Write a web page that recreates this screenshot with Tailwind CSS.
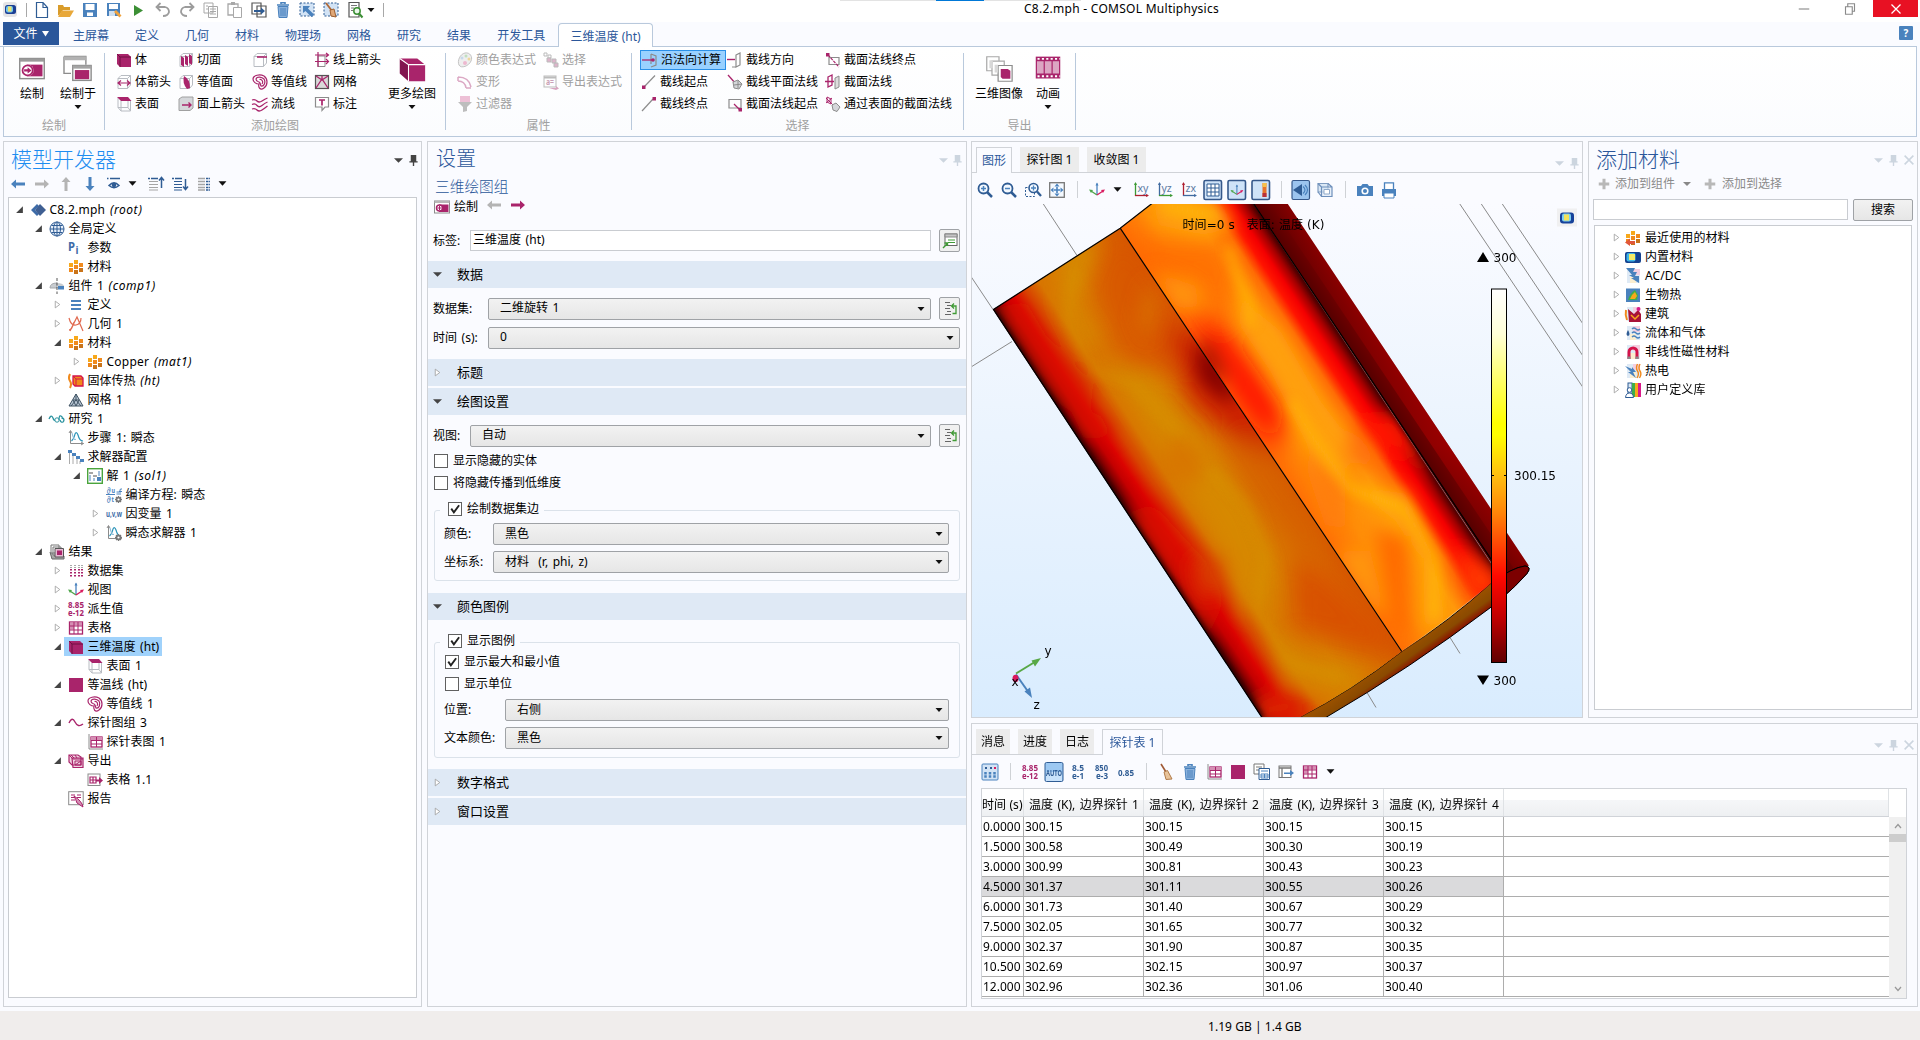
<!DOCTYPE html>
<html lang="zh-CN">
<head>
<meta charset="utf-8">
<title>C8.2.mph - COMSOL Multiphysics</title>
<script src="https://cdn.jsdelivr.net/npm/@tailwindcss/browser@4"></script>
</head>
<body class="w-[1920px] h-[1040px] overflow-hidden flex flex-col bg-[#fafbff] text-black text-[12px] leading-4 whitespace-nowrap font-['Noto_Sans','Noto_Sans_CJK_SC',sans-serif]">

<!-- title bar -->
<header class="relative h-[22px] shrink-0 bg-white flex items-start">
  <div class="flex items-center h-5 w-[1024px]">
    <span class="w-[18px] pl-0.5"><i data-i="app" class="size-4"></i></span>
    <span class="w-px h-[14px] bg-[#a8a8a8] ml-2"></span>
    <div id="qat" class="flex items-center ml-[3px]"></div>
    <span class="w-2 flex justify-center"><i data-i="down" class="size-2"></i></span>
    <span class="w-px h-[14px] bg-[#a8a8a8] ml-2"></span>
  </div>
  <div class="h-[18px] leading-[18px] tracking-[0.27px]">C8.2.mph - COMSOL Multiphysics</div>
  <div class="ml-auto flex h-[17px] mr-[2px]">
    <span class="w-[46px] flex items-center justify-center"><i data-i="min" class="size-3"></i></span>
    <span class="w-[46px] flex items-center justify-center"><i data-i="restore" class="size-3"></i></span>
    <span class="w-[45px] flex items-center justify-center bg-[#e81123]"><i data-i="close" class="size-3"></i></span>
  </div>
  <div class="absolute left-[840px] top-0 w-[241px] h-px bg-[#e3e3e3]"><div class="ml-24 w-12 h-px bg-[#0078d7]"></div></div>
</header>

<!-- ribbon tabs -->
<nav class="h-[25px] shrink-0 flex items-stretch border-b border-[#b9c9dc] text-[#2b579a] pl-[3px] mr-[3px]">
  <div class="w-14 h-[23px] bg-[#2b579a] text-white flex items-center justify-center gap-1">文件<i data-i="downw" class="size-[7px]"></i></div>
  <div id="tabs" class="flex items-center pl-[1px] pt-1"></div>
  <div class="relative -mb-px w-[95px] mt-[1px] border border-b-0 border-[#b9c9dc] rounded-t bg-white flex items-center justify-center pt-[2px]">三维温度 (ht)</div>
  <div class="ml-auto mt-[4px] mr-[4px] w-[14px] h-[14px] rounded-[1px] bg-[#4a82bd] text-white text-[10px] leading-[14px] font-bold text-center">?</div>
</nav>

<!-- ribbon -->
<section class="h-[90px] shrink-0 mx-[3px] border border-t-0 border-[#b9c9dc] bg-gradient-to-b from-white to-[#fbfcfe] flex">
  <div class="w-[101px] my-[6px] border-r border-[#b9c9dc] relative flex">
    <div class="w-[56px] flex flex-col items-center pt-[2px]"><i data-i="plot" class="w-7 h-7"></i><span class="mt-[3px]">绘制</span></div>
    <div class="-ml-1 w-[44px] flex flex-col items-center pt-[2px]"><i data-i="plotin" class="w-8 h-7"></i><span class="mt-[3px]">绘制于</span><i data-i="down" class="size-2 mt-[1px]"></i></div>
    <span class="absolute left-0 right-0 bottom-[-4px] text-center text-[#a0a0a0]">绘制</span>
  </div>
  <div class="w-[341px] my-[6px] border-r border-[#b9c9dc] relative flex">
    <div id="rg1" class="grid grid-flow-col grid-rows-3 h-[66px] grid-cols-[62px_74px_62px_70px] -mt-1 pl-[10px]"></div>
    <div class="w-[52px] ml-[3px] flex flex-col items-center pt-[2px]"><i data-i="morecube" class="w-7 h-7"></i><span class="mt-[3px]">更多绘图</span><i data-i="down" class="size-2 mt-[1px]"></i></div>
    <span class="absolute left-0 right-0 bottom-[-4px] text-center text-[#a0a0a0]">添加绘图</span>
  </div>
  <div class="w-[186px] my-[6px] border-r border-[#b9c9dc] relative text-[#a0a0a0]">
    <div id="rg2" class="grid grid-flow-col grid-rows-3 h-[66px] grid-cols-[86px_90px] -mt-1 pl-[10px]"></div>
    <span class="absolute left-0 right-0 bottom-[-4px] text-center">属性</span>
  </div>
  <div class="w-[332px] my-[6px] border-r border-[#b9c9dc] relative">
    <div id="rg3" class="grid grid-flow-col grid-rows-3 h-[66px] grid-cols-[86px_98px_130px] -mt-1 pl-[8px]"></div>
    <span class="absolute left-0 right-0 bottom-[-4px] text-center text-[#a0a0a0]">选择</span>
  </div>
  <div class="w-[112px] my-[6px] border-r border-[#b9c9dc] relative flex">
    <div class="w-[50px] ml-[10px] flex flex-col items-center pt-[2px]"><i data-i="img3d" class="w-8 h-7"></i><span class="mt-[3px]">三维图像</span></div>
    <div class="w-9 ml-[6px] flex flex-col items-center pt-[1px]"><i data-i="film" class="w-8 h-7"></i><span class="mt-1">动画</span><i data-i="down" class="size-2 mt-[1px]"></i></div>
    <span class="absolute left-0 right-0 bottom-[-4px] text-center text-[#a0a0a0]">导出</span>
  </div>
</section>

<main class="flex mt-[4px] h-[866px] shrink-0 pl-[3px]">
  <!-- model builder -->
  <section class="w-[419px] border border-[#d0d3d8] flex flex-col">
    <div class="h-9 flex items-center pl-[7px] pr-[2px]">
      <h2 class="text-[21px] leading-9 font-light text-[#1e8df0] -mt-0.5">模型开发器</h2>
      <i data-i="ddark" class="size-[9px] ml-auto"></i><i data-i="pin" class="size-[11px] ml-[5px]"></i>
    </div>
    <div id="treebar" class="h-[19px] flex items-center pl-[2px] -mt-[4px]"></div>
    <div id="tree" class="mt-[4px] ml-1 w-[409px] h-[801px] border border-[#c9ccd1] bg-white pt-[2px] [word-spacing:1.5px]"></div>
  </section>

  <!-- settings -->
  <section class="ml-[5px] w-[540px] border border-[#d0d3d8] flex flex-col">
    <div class="h-9 flex items-center pl-2 pr-[3px]">
      <h2 class="text-[20px] leading-9 font-light text-[#2b579a] -mt-0.5">设置</h2>
      <i data-i="dgray" class="size-[9px] ml-auto"></i><i data-i="ping" class="size-[11px] ml-[4px]"></i>
    </div>
    <div class="h-[18px] leading-[16px] text-[14.7px] text-[#2b579a] pl-[7px] font-light">三维绘图组</div>
    <div class="h-[22px] flex items-center pl-[6px]"><i data-i="plotsm" class="size-4"></i><span class="ml-1">绘制</span><i data-i="leftg" class="size-4 ml-2 -mt-1"></i><i data-i="rightm" class="size-4 ml-2 -mt-1"></i></div>
    <div class="mt-[11px] h-[23px] flex items-center pl-[5px]">
      <span class="w-[37px]">标签:</span><div class="w-[461px] h-[21px] border border-[#c9ccd1] bg-white px-[2px] leading-[18px] [word-spacing:1.5px]">三维温度 (ht)</div>
      <div class="ml-[8px] w-[21px] h-[23px] rounded-[2px] border border-[#9fa2a6] bg-[#f0f0f0] flex items-center justify-center"><i data-i="lbl" class="size-4"></i></div>
    </div>
    <div class="mt-[9px]" data-sec="数据" data-open="1"></div>
    <div class="mt-[9px] h-[23px] flex items-center pl-[5px]" data-row="数据集:|55|443|二维旋转 1|btn"></div>
    <div class="mt-[6px] h-[23px] flex items-center pl-[5px]" data-row="时间 (s):|55|472|0|"></div>
    <div class="mt-[10px]" data-sec="标题"></div>
    <div class="mt-[2px]" data-sec="绘图设置" data-open="1"></div>
    <div class="mt-[9px] h-[23px] flex items-center pl-[5px]" data-row="视图:|37|461|自动|btn"></div>
    <div class="mt-[3px] h-[22px] flex items-center pl-[6px]" data-chk="0">显示隐藏的实体</div>
    <div class="h-[22px] flex items-center pl-[6px]" data-chk="0">将隐藏传播到低维度</div>
    <fieldset class="relative mt-[16px] ml-[6px] w-[526px] h-[71px] border border-[#dbe2ea] rounded-[3px] flex flex-col">
      <div class="absolute left-[5px] top-[-13px] h-[22px] w-[104px] bg-[#fafbff] flex items-center pl-2" data-chk="1">绘制数据集边</div>
      <div class="mt-[12px] h-[22px] flex items-center pl-[9px]" data-row="颜色:|49|456|黑色|"></div>
      <div class="mt-[6px] h-[22px] flex items-center pl-[9px]" data-row="坐标系:|49|456|材料&nbsp; (r, phi, z)|"></div>
    </fieldset>
    <div class="mt-[12px]" data-sec="颜色图例" data-open="1"></div>
    <fieldset class="relative mt-[22px] ml-[6px] w-[526px] h-[116px] border border-[#dbe2ea] rounded-[3px] flex flex-col">
      <div class="absolute left-[5px] top-[-13px] h-[22px] w-[80px] bg-[#fafbff] flex items-center pl-2" data-chk="1">显示图例</div>
      <div class="mt-[8px] h-[22px] flex items-center pl-[10px]" data-chk="1">显示最大和最小值</div>
      <div class="h-[22px] flex items-center pl-[10px]" data-chk="0">显示单位</div>
      <div class="mt-[4px] h-[22px] flex items-center pl-[9px]" data-row="位置:|61|444|右侧|"></div>
      <div class="mt-[6px] h-[22px] flex items-center pl-[9px]" data-row="文本颜色:|61|444|黑色|"></div>
    </fieldset>
    <div class="mt-[11px]" data-sec="数字格式"></div>
    <div class="mt-[2px]" data-sec="窗口设置"></div>
  </section>

  <div class="ml-[4px] w-[947px] flex flex-col gap-[5px]">
    <div class="flex h-[577px] gap-[5px]">
      <!-- graphics -->
      <section class="w-[612px] border border-[#d0d3d8] flex flex-col">
        <div class="h-[31px] border-b border-[#d0d3d8] flex items-end pl-1 pr-[2px] shrink-0">
          <div class="-mb-px w-[36px] h-[26px] border border-b-0 border-[#d0d3d8] bg-[#fafbff] text-[#2b579a] flex items-center justify-center">图形</div>
          <div class="ml-[8px] w-[59px] h-[25px] bg-[#ececec] flex items-center justify-center">探针图 1</div>
          <div class="ml-[8px] w-[59px] h-[25px] bg-[#ececec] flex items-center justify-center">收敛图 1</div>
          <i data-i="dgray" class="size-[9px] ml-auto mb-1"></i><i data-i="ping" class="size-[11px] ml-[5px] mb-[3px]"></i>
        </div>
        <div id="gbar" class="h-[31px] flex items-center pl-[1px] pt-[2px] shrink-0"></div>
        <svg class="w-[610px] h-[513px] mt-auto" viewBox="972 203.5 610 513" font-family="'DejaVu Sans','Noto Sans CJK SC',sans-serif" font-size="12">
          <defs>
            <linearGradient id="bg" x2="0" y2="1"><stop stop-color="#fafbff"/><stop offset=".45" stop-color="#ebf4fe"/><stop offset="1" stop-color="#d9ecfe"/></linearGradient>
            <linearGradient id="gl" gradientUnits="userSpaceOnUse" x1="993" y1="309" x2="1118.500" y2="226.500"><stop stop-color="#480000"/><stop offset=".04" stop-color="#7a0000"/><stop offset=".1" stop-color="#c40000"/><stop offset=".16" stop-color="#dc0400"/><stop offset=".25" stop-color="#d84400"/><stop offset=".36" stop-color="#d87600"/><stop offset=".6" stop-color="#d88200"/><stop offset=".85" stop-color="#d87000"/><stop offset="1" stop-color="#d65a00"/></linearGradient>
            <linearGradient id="gr" gradientUnits="userSpaceOnUse" x1="1120" y1="228" x2="1224" y2="159"><stop stop-color="#ff6e06"/><stop offset=".25" stop-color="#ff8e08"/><stop offset=".55" stop-color="#ff980c"/><stop offset=".7" stop-color="#ff6c06"/><stop offset=".79" stop-color="#ff1400"/><stop offset=".86" stop-color="#f40000"/><stop offset=".93" stop-color="#a80000"/><stop offset="1" stop-color="#4c0000"/></linearGradient>
            <linearGradient id="gd" gradientUnits="userSpaceOnUse" x1="1253" y1="203" x2="1277" y2="187"><stop stop-color="#540000"/><stop offset="1" stop-color="#840000"/></linearGradient>
            <linearGradient id="gd2" x2="0" y2="1"><stop stop-color="#a00000" stop-opacity="0"/><stop offset=".65" stop-color="#a80000" stop-opacity=".6"/><stop offset="1" stop-color="#900000" stop-opacity=".2"/></linearGradient>
            <linearGradient id="ge" gradientUnits="userSpaceOnUse" x1="1400" y1="651" x2="1413" y2="669"><stop stop-color="#985000"/><stop offset=".45" stop-color="#8a4a00"/><stop offset=".75" stop-color="#8a1a00"/><stop offset="1" stop-color="#5a0000"/></linearGradient>
            <linearGradient id="bar" x2="0" y2="1"><stop stop-color="#fff"/><stop offset=".12" stop-color="#ffffd8"/><stop offset=".36" stop-color="#ffff00"/><stop offset=".39" stop-color="#ffff00"/><stop offset=".5" stop-color="#ffbe10"/><stop offset=".6" stop-color="#ff8408"/><stop offset=".77" stop-color="#ff0800"/><stop offset=".88" stop-color="#c00000"/><stop offset="1" stop-color="#600000"/></linearGradient>
            <filter id="b0" x="-60%" y="-60%" width="220%" height="220%"><feGaussianBlur stdDeviation="13"/></filter>
            <filter id="b1" x="-50%" y="-50%" width="200%" height="200%"><feGaussianBlur stdDeviation="9"/></filter>
            <filter id="b2" x="-50%" y="-50%" width="200%" height="200%"><feGaussianBlur stdDeviation="6"/></filter>
            <filter id="b3" x="-50%" y="-50%" width="200%" height="200%"><feGaussianBlur stdDeviation="2.500"/></filter>
            <clipPath id="cl"><path d="M993 309 1120.200 227.700 1401.800 651Q1350 691 1299.400 717H1261.800z"/></clipPath>
            <clipPath id="cr"><path d="M1120.200 227.700 1152 203H1253.500L1506.500 586 1491 582.700Q1445 622 1401.800 651z"/></clipPath>
          </defs>
          <rect x="971" y="203" width="613" height="515" fill="url(#bg)"/>
          <g stroke="#8a8a8a" stroke-width="1"><path d="M1043 203 1077 255M971 276 993 309M971 366.500 1012 341M1459.500 203 1583 387M1481 203 1583 355.500M1502 203 1583 323.500M1450 637 1460 653M1367 692 1376 707"/></g>
          <path d="M1253.500 203H1287.500L1528.700 565 1506 594 1491 562z" fill="url(#gd)"/>
          <path d="M1270 203H1287.500L1528.700 565 1518 574z" fill="url(#gd2)"/>
          <path d="M1299.400 717Q1352 690 1401.800 651 1450 620 1491 582.700 1512 567 1525 565.500 1532 566 1527 573 1514 588 1491 606.700 1410 668 1325.800 717z" fill="url(#ge)" stroke="#000"/>
          <path d="M1491 583Q1512 567 1525 565.500 1532 566 1527 573 1516 586 1500 599z" fill="#7c0000" stroke="#000"/>
          <g clip-path="url(#cl)">
            <rect x="980" y="200" width="440" height="520" fill="url(#gl)"/>
            <g filter="url(#b0)">
              <path d="M1090 290 1108 235 1130 235 1200 330 1180 370 1120 370z" fill="#d85200" opacity=".8"/>
              <path d="M1165 325 1205 330 1290 450 1250 450 1190 400z" fill="#cc1c00"/>
              <path d="M1225 440 1260 440 1330 540 1310 570 1250 490z" fill="#d66000" opacity=".8"/>
              <path d="M1290 560 1325 570 1400 640 1380 655 1290 630z" fill="#d84c00" opacity=".9"/>
              <path d="M1120 520 1150 500 1205 560 1225 600 1200 650z" fill="#dc1400" opacity=".8"/>
            </g>
            <g filter="url(#b1)">
              <path d="M1070 240 1098 245 1074 300 1100 340 1085 345 1060 300z" fill="#d68c00" opacity=".8"/>
              <path d="M1148 280 1160 300 1150 340 1136 320z" fill="#d87400" opacity=".7"/>
              <path d="M993 309 1025 300 1046 335 1095 385 1085 420 1040 390z" fill="#dc1800" opacity=".5"/>
              <path d="M1195 345 1215 350 1240 395 1225 400 1200 380z" fill="#800000"/>
              <path d="M1100 355 1150 375 1185 420 1210 450 1250 510 1270 570 1245 620 1225 560 1190 500 1130 400z" fill="#d68c00" opacity=".7"/>
              <path d="M1066 400 1100 415 1115 435 1085 440z" fill="#dc1000" opacity=".7"/>
              <path d="M1170 430 1205 455 1195 490 1165 465z" fill="#d87600"/>
              <path d="M1190 560 1225 555 1225 590 1200 600z" fill="#d84000" opacity=".8"/>
              <path d="M1250 575 1268 570 1275 630 1310 660 1370 672 1340 690 1285 680z" fill="#d68c00" opacity=".8"/>
              <path d="M1250 700 1290 690 1320 715 1260 725z" fill="#dc2000"/>
            </g>
            <path d="M993 309 1262 717" stroke="#280000" stroke-width="5" filter="url(#b3)"/>
            <g filter="url(#b2)" stroke="#d89a00" fill="none" stroke-width="6" opacity=".5"><path d="M1075 270 1068 320 1092 370 1135 385 1180 435M1212 470 1245 505 1266 550 1258 610 1285 660 1340 677"/></g>
          </g>
          <g clip-path="url(#cr)">
            <rect x="1110" y="195" width="420" height="470" fill="url(#gr)"/>
            <g filter="url(#b0)">
              <path d="M1120 232 1150 240 1225 240 1240 290 1225 330 1190 280 1160 290z" fill="#ff6608" opacity=".75"/>
              <path d="M1185 310 1225 325 1250 360 1285 410 1275 450 1235 400z" fill="#ff0c00"/>
              <path d="M1360 430 1400 430 1425 480 1430 460 1400 420z" fill="#ff1400"/>
            </g>
            <g filter="url(#b1)">
              <path d="M1150 203 1215 195 1235 225 1205 235 1160 225z" fill="#ffa60c" opacity=".9"/>
              <path d="M1152 270 1195 285 1200 305 1180 310z" fill="#ff960a"/>
              <path d="M1195 340 1212 345 1228 382 1208 372z" fill="#980000"/>
              <path d="M1238 275 1255 310 1280 330 1320 400 1350 440 1345 480 1310 450 1270 370 1240 325z" fill="#ffa00c"/>
              <path d="M1355 420 1385 445 1405 460 1415 450 1395 415z" fill="#ff1400"/>
              <path d="M1350 425 1375 455 1370 470 1345 455z" fill="#ff7008"/>
              <path d="M1300 450 1345 480 1345 530 1325 525z" fill="#ff7e08"/>
              <path d="M1350 485 1405 493 1435 560 1445 620 1425 630 1422 560 1395 520z" fill="#ffa80c"/>
              <path d="M1375 530 1410 535 1410 640 1390 630z" fill="#ff6c06"/>
              <path d="M1335 550 1370 550 1385 610 1375 610z" fill="#ff980c"/>
              <path d="M1455 545 1500 575 1500 590 1470 600z" fill="#ff3a04"/>
            </g>
            <path d="M1253.500 203 1506 581" stroke="#380000" stroke-width="3" filter="url(#b3)"/>
            <g filter="url(#b2)" stroke="#ffc20e" fill="none" stroke-width="7" opacity=".7"><path d="M1228 245 1247 300 1252 325M1290 400 1315 440 1350 488 1405 508 1435 560 1434 620"/><path d="M1160 204 1215 215"/></g>
          </g>
          <g fill="none" stroke="#000" stroke-width="1.200"><path d="M1262 717 993.500 309 1120.200 227.700 1152 203M1120.200 227.700 1401.800 651M1253.500 203 1506 581"/></g>
          <rect x="1491.500" y="288.500" width="15" height="373.500" fill="url(#bar)" stroke="#000"/>
          <path d="M1492 475h2M1504 475h3" stroke="#000"/>
          <path d="M1477 261.500 1483 251.500 1489 261.500zM1477 675 1483 684.500 1489 675z"/>
          <text x="1493.500" y="261.500">300</text><text x="1493.500" y="684">300</text><text x="1514" y="479">300.15</text>
          <text x="1182.500" y="228.500" xml:space="preserve" textLength="142">时间=0 s   表面: 温度 (K)</text>
          <path d="M1016 673 1034 662" stroke="#58a846" stroke-width="2"/><path d="M1041 657.500 1031.500 660 1035 666z" fill="#58a846"/>
          <path d="M1016 674 1028 691" stroke="#4a82bd" stroke-width="2"/><path d="M1032 697.500 1024.500 691 1030 687z" fill="#4a82bd"/>
          <ellipse cx="1015.500" cy="678" rx="3" ry="3.800" fill="#d91a5e"/>
          <text x="1044.500" y="654">y</text><text x="1033.500" y="708">z</text><text x="1011.500" y="685">x</text>
          <g transform="translate(1556 208)"><rect x="1" y="0" width="20" height="18" fill="#eee" opacity=".8"/><rect x="4" y="4" width="14" height="11" rx="3" fill="#17429a"/><rect x="6" y="5" width="9" height="8" rx="2" fill="#7fd0f0"/><rect x="8" y="6" width="5" height="6" fill="#f4e25a"/></g>
        </svg>
      </section>

      <!-- add material -->
      <section class="w-[330px] border border-[#d0d3d8] flex flex-col">
        <div class="h-9 flex items-center pl-[7px] pr-[3px]">
          <h2 class="text-[21px] leading-9 font-light text-[#2b579a] -mt-0.5">添加材料</h2>
          <i data-i="dgray" class="size-[9px] ml-auto"></i><i data-i="ping" class="size-[11px] ml-[5px]"></i><i data-i="xg" class="size-[10px] ml-[5px]"></i>
        </div>
        <div class="h-3 flex items-center pl-[9px] text-[#8a8a8a]"><i data-i="plus" class="size-3"></i><span class="ml-[5px]">添加到组件</span><i data-i="dmid" class="size-2 ml-2"></i><i data-i="plus" class="size-3 ml-[13px]"></i><span class="ml-[6px]">添加到选择</span></div>
        <div class="mt-[8px] h-[23px] flex items-center pl-1"><div class="w-[255px] h-[21px] border border-[#c9ccd1] bg-white"></div><div class="ml-[5px] w-[60px] h-[22px] border border-[#9fa2a6] rounded-[2px] bg-gradient-to-b from-[#f2f2f2] to-[#e6e6e6] text-center leading-[19px]">搜索</div></div>
        <div id="mats" class="mt-[4px] ml-[5px] w-[318px] h-[485px] border border-[#c9ccd1] bg-white pt-[2px]"></div>
      </section>
    </div>

    <!-- probe table -->
    <section class="h-[284px] border border-[#d0d3d8] flex flex-col">
      <div class="h-[31px] border-b border-[#d0d3d8] flex items-end pl-1 pr-[3px] shrink-0">
        <div class="w-[34px] h-[25px] bg-[#ececec] flex items-center justify-center">消息</div>
        <div class="ml-[8px] w-[34px] h-[25px] bg-[#ececec] flex items-center justify-center">进度</div>
        <div class="ml-[8px] w-[34px] h-[25px] bg-[#ececec] flex items-center justify-center">日志</div>
        <div class="ml-[8px] -mb-px w-[61px] h-[26px] border border-b-0 border-[#d0d3d8] bg-[#fafbff] text-[#2b579a] flex items-center justify-center">探针表 1</div>
        <i data-i="dgray" class="size-[9px] ml-auto mb-1"></i><i data-i="ping" class="size-[11px] ml-[5px] mb-[3px]"></i><i data-i="xg" class="size-[10px] ml-[5px] mb-1"></i>
      </div>
      <div id="tbar" class="h-[33px] flex items-center pl-[6px] shrink-0"></div>
      <div class="ml-[9px] w-[926px] h-[211px] border border-[#d0d3d8] bg-white flex overflow-hidden">
        <div class="w-[907px]">
          <div id="thead" class="h-[28px] grid grid-cols-[42px_120px_120px_120px_120px_1fr] border-b border-[#d0d3d8] bg-[linear-gradient(#fff_40%,#f5f6f8_42%,#eef0f2)]"></div>
          <div id="tbody"></div>
        </div>
        <div class="flex-1 flex flex-col"><div class="h-[28px]"></div><div class="flex-1 bg-[#f0f0f0] flex flex-col items-center"><i data-i="chu" class="size-2 mt-[5px]"></i><div class="mt-1 h-2 w-full bg-[#cdcdcd]"></div><i data-i="chd" class="size-2 mt-auto mb-[5px]"></i></div></div>
      </div>
    </section>
  </div>
</main>

<footer class="mt-[4px] h-[29px] bg-[#f0edec] flex items-center pt-[3px] pl-[1208px] tracking-[0.05px]">1.19 GB | 1.4 GB</footer>

<script>
const M='#a9246b',B='#4a82bd',D='#2f5c94',G='#8c8c8c',L='#b8bcc2';
const cube=(c)=>`<path d="M2 4.500 5 1.500H14.500V11L11.500 14.500H2zM2 4.500H11.500V14.500M11.500 4.500 14.500 1.500" fill="none" stroke="${c}"/>`;
const mats=`<g fill="#f7a81b"><rect x="1" y="4" width="4" height="4"/><rect x="6" y="1" width="4" height="4"/></g><g fill="#f08a1d"><rect x="6" y="6" width="4" height="4"/><rect x="11" y="4" width="4" height="4"/><rect x="1" y="9" width="4" height="4"/></g><g fill="#c9741a"><rect x="11" y="9" width="4" height="4"/><rect x="6" y="11" width="4" height="4"/></g>`;
const axes=`<path d="M8 13V1.500" stroke="${B}" stroke-width="1.300"/><path d="M6.500 3.500 8 .5 9.500 3.500z" fill="${B}"/><path d="M8 13 2 9" stroke="#4ea64a" stroke-width="1.300"/><path d="M0 7.500 4 8 2 11z" fill="#4ea64a"/><path d="M8 13 14 9" stroke="#d91a5e" stroke-width="1.300"/><path d="M16 7.500 12 8 14 11z" fill="#d91a5e"/>`;
const press=(s)=>`<rect x="-1" y="-1.500" width="17.500" height="19" rx="1.500" fill="#cfe3f8" stroke="#36588a" stroke-width="1.600"/>${s}`;
const tx=(x,y,s,c,t,w)=>`<text x="${x}" y="${y}" font-size="${s}" fill="${c}" font-weight="bold" textLength="${w}" lengthAdjust="spacingAndGlyphs">${t}</text>`;
const grid=(c,f)=>`<rect x="1.500" y="2" width="13" height="12" fill="#fff" stroke="${c}" stroke-width="1.300"/><path d="M2 2.500h12v3H2zM2 2.500h4v7H2z" fill="${f}"/><path d="M1.500 6h13M1.500 10h13M6 2v12M10 2v12" stroke="${c}" fill="none"/>`;
const curve=`<path d="M2.500 1V13.500H15.500M1 3 2.500.5 4 3M13 12 15.500 13.500 13 15" fill="none" stroke="${G}"/><path d="M3.500 11Q6 9 7 4 8.500 1 10 5 11.500 11 15 11" fill="none" stroke="#2b93b8" stroke-width="1.200"/><path d="M4 3Q6 12 8 9" fill="none" stroke="#85b7d6"/>`;
const contour=`<path d="M1 5C1 1 8 0 12 2 16 5 16 11 12 14 8 17 6 13 7 10 4 10 1 8 1 5zM4 5C5 2 10 3 12 5 14 8 12 13 9 12 8 10 9 8 6 7.500 4 7 4 6 4 5zM7.500 5.500C10 5 11.500 8 10 10" fill="none" stroke="${M}" stroke-width="1.200"/>`;
const axp=(a,c1,c2)=>`<path d="M2.500 1V14" stroke="${c1}" stroke-width="1.300"/><path d="M2 13.500H15" stroke="${c2}" stroke-width="1.300"/><path d="M1 3 2.500 0 4 3z" fill="${c1}"/><path d="M13 12 16 13.500 13 15z" fill="${c2}"/><text x="4.500" y="9.500" font-size="10.500" fill="#5c7aa3">${a}</text>`;
const bolt=`<path d="M1 0h9l-2 4 4 0-2 4 4 0L14 15 6 10h3L4 7h3z" fill="${B}"/>`;
const bk=`<rect x="2" y="1" width="13" height="14" fill="#dfeaf5"/><path d="M8 1h7v6H8z" fill="#f4cfe0"/><path d="M5 9h6v6H5z" fill="#fbeed0"/>`;
const pen=`<path d="M8 10 13.500 15.500 15.500 13.500 10 8z" fill="#f0a23c"/>`;
const gear=`<path d="M12.500 9V16M9 12.500H16M10 10 15 15M15 10 10 15" stroke="#777" stroke-width="1.300"/><circle cx="12.500" cy="12.500" r="1.900" fill="#fff" stroke="#777" stroke-width="1.600"/>`;
const I={
app:`<rect x="1" y="0" width="14" height="15" rx="3" fill="#e4e4e6"/><rect x="3" y="3" width="11" height="9" rx="2.500" fill="#1c3f94"/><rect x="4" y="4" width="7" height="6.500" rx="2" fill="#72c6ee"/><rect x="6" y="4.500" width="3.500" height="5" fill="#efe36a"/>`,
down:`<path d="M1 4h14L8 12z" fill="#111"/>`, downw:`<path d="M0 2h16L8 15z" fill="#fff"/>`, ddark:`<path d="M0 4h16L8 12z" fill="#444"/>`, dgray:`<path d="M0 4h16L8 12z" fill="#ccd5df"/>`, dmid:`<path d="M0 4h16L8 12z" fill="#888"/>`,
pin:`<path d="M4 0h8v9h2v2H9v5H7v-5H2V9h2z" fill="#444"/>`, ping:`<path d="M4 0h8v9h2v2H9v5H7v-5H2V9h2z" fill="#ccd5df"/>`, xg:`<path d="M1 1 15 15M15 1 1 15" stroke="#ccd5df" stroke-width="2.500"/>`,
min:`<path d="M1 8h14" stroke="#8a8a8a" stroke-width="1.500"/>`, restore:`<path d="M2 5h9v10H2zM5 5V1h9v10h-3" fill="none" stroke="#8a8a8a" stroke-width="1.500"/>`, close:`<path d="M2 2 14 14M14 2 2 14" stroke="#fff" stroke-width="1.700"/>`,
plus:`<path d="M6 1h4v5h5v4h-5v5H6v-5H1V6h5z" fill="#b8b8b8"/>`,
newf:`<path d="M2.500 .5H9l4.500 5V15.500h-11zM9 .5V5.500h4.500" fill="#fff" stroke="${D}" stroke-width="1.200"/>`,
open:`<path d="M0 13V3h5l1 2h6v3H5L1 13.500" fill="#d99c2b"/><path d="M4 8.500H16L12 15H0z" fill="#e8a83a"/>`,
save:`<path d="M1 1H15V15H1z" fill="${B}"/><path d="M3.500 2h9v6h-9zM5 10.500h6V14H5z" fill="#fff"/>`,
saveas:`<path d="M1 1H14V14H1z" fill="${B}"/><path d="M3 2h9v5H3z" fill="#fff"/><path d="M3 9h6v5H3z" fill="#cfe0f0"/>${pen}`,
run:`<path d="M4 3 13 8.500 4 14z" fill="#3c8f35"/>`,
undo:`<path d="M2 5H10Q14 6 14 10 13 14 8 14M5.500 1 1.500 5 5.500 9" fill="none" stroke="#9c9c9c" stroke-width="1.800"/>`,
redo:`<path d="M14 5H6Q2 6 2 10 3 14 8 14M10.500 1 14.500 5 10.500 9" fill="none" stroke="#9c9c9c" stroke-width="1.800"/>`,
copy:`<path d="M1 1h9v10H1zM5.500 4.500h9v11h-9z" fill="#fff" stroke="#a8a8a8"/><path d="M7 7h6M7 9.500h6M7 12h6M3 4h2M3 7h2" stroke="#a8a8a8"/>`,
paste:`<path d="M1 2h10v11H1z" fill="none" stroke="#a8a8a8" stroke-width="1.300"/><path d="M4 0h4v3H4z" fill="#a8a8a8"/><path d="M6.500 5.500h8v10h-8z" fill="#fff" stroke="#a8a8a8"/>`,
dup:`<path d="M1 1h9v11H1zM6 4h9v11H6z" fill="#fff" stroke="#555" stroke-width="1.200"/><path d="M3 8h7V5.500L14 9l-4 3.500V10H3z" fill="#2f5c94"/>`,
del:`<path d="M2 3h12M6 2V.8h4V2" stroke="${B}" stroke-width="1.600" fill="none"/><path d="M3 4.500h10l-1 11H4z" fill="#8ab1dc" stroke="${B}"/><path d="M6 6v8M8 6v8M10 6v8" stroke="${B}"/>`,
sel:`<rect x="1" y="1" width="14" height="13" fill="#d2e3f5" stroke="${D}" stroke-dasharray="2 1.500"/><path d="M4 4h7L9 6.500 15 12.500 12.500 15 6.500 9 4 11z" fill="${B}"/>`,
clr:`<rect x="1" y="1" width="14" height="13" fill="#d2e3f5" stroke="${D}" stroke-dasharray="2 1.500"/><path d="M3 1 9 9" stroke="#b06a3a" stroke-width="1.800"/><path d="M7 8l4-1 2 8-5-1z" fill="#e0a878" stroke="#a06030"/>`,
find:`<path d="M2 .5H12V15H2z" fill="#fff" stroke="#555" stroke-width="1.200"/><path d="M4 3.500h6M4 6h3M4 8.500h2" stroke="#777"/><circle cx="10" cy="9" r="3.200" fill="#eaf6ea" stroke="#3c8f35" stroke-width="1.500"/><path d="M12 11.500 15.500 15.500" stroke="#3c8f35" stroke-width="2"/>`,
plot:`<rect x="1" y="2" width="14" height="11.500" fill="#fff" stroke="#8c8c8c" stroke-width=".8"/><path d="M1 2h14v1.800H1z" fill="#9a9a9a"/><path d="M5 5.500h9v6.700H5z" fill="${M}"/><circle cx="5.500" cy="8.800" r="3.400" fill="#fff"/><circle cx="5.500" cy="8.800" r="2.900" fill="#fff" stroke="${M}" stroke-width="1"/><path d="M3.500 8.200h2V7L7.700 8.800 5.500 10.600V9.400h-2z" fill="${M}"/>`,
plotsm:`<rect x=".5" y="2" width="15" height="12" fill="#fff" stroke="#8c8c8c"/><path d="M.5 2h15v2H.5z" fill="#b8b8b8"/><path d="M5 5.500h9.500V13H5z" fill="${M}"/><circle cx="5.500" cy="9" r="3" fill="#fff" stroke="${M}" stroke-width="1.500"/><path d="M3.500 9H7.500M5.500 7V11" stroke="${M}"/>`,
plotin:`<path d="M0 .8h12.500v4.700M0 .8V10.500H4" fill="#fff" stroke="#8c8c8c" stroke-width=".8"/><path d="M0 .8h12.500v2.200H0z" fill="#b2b2b2"/><rect x="5" y="6" width="10.500" height="8.500" fill="#fff" stroke="#8c8c8c" stroke-width=".8"/><path d="M5 6h10.500v1.800H5z" fill="#a4a4a4"/><rect x="6.200" y="8.600" width="8.200" height="5.200" fill="${M}"/>`,
morecube:`<path d="M1 2H11L15.500 5.500V15H6V5.500z" fill="${M}"/><path d="M1 2 6 5.500V15L1 10.500z" fill="#821550"/><path d="M1 2 6 5.500H15.500M6 5.500V15" stroke="#fff" stroke-width=".6" fill="none"/>`,
vol:`<path d="M1 2H12L15 5V15H4L1 12z" fill="${M}"/><path d="M1 2 4 5H15M4 5V15" stroke="#6f0f42" fill="none"/>`,
volar:cube(L)+`<path d="M2 9H14M11 6.500 14 9 11 11.500M5 6.500 2 9 5 11.500" stroke="${M}" fill="none" stroke-width="1.200"/>`,
surf:`<path d="M2 2V11.500L5 15H14.500V5M5 5V15M2 11.500H12V2M12 11.500 14.500 15" fill="none" stroke="${L}"/><path d="M1 1H12L15.500 5H5z" fill="${M}"/>`,
slice:cube(L)+`<path d="M3 4 6 6V15L3 13zM7 3 10 5V14L7 12zM11 2 14 4V13L11 11z" fill="${M}"/>`,
iso:cube(L)+`<path d="M6 2Q12 5 12 14L9 15Q4 9 6 2z" fill="${M}"/>`,
surfar:`<path d="M1 3 4 1H15V12L12 14.500H1z" fill="#d5d7da" stroke="#a0a0a0"/><path d="M4 9H13M10.500 6.500 13 9 10.500 11.500" stroke="${M}" fill="none" stroke-width="1.400"/>`,
line:cube(L)+`<path d="M5 5H15" stroke="${M}" stroke-width="1.600"/>`,
cont:contour,
stream:`<path d="M0 4Q3 3 5 5T10 5 15.500 2M0 8.500Q3 7 5 9.500T10 9.500 15.500 6M0 13Q3 12 5 14T10 14 15.500 10" fill="none" stroke="${M}" stroke-width="1.300"/>`,
linear:`<path d="M4 4H11V14.500H4z" fill="none" stroke="${G}"/><path d="M1 3H14M12 1 14.500 3 12 5M1 9.500H14M12 7 14.500 9.500 12 12M4 0V15" stroke="${M}" fill="none" stroke-width="1.200"/>`,
mesh:`<rect x="1.500" y="1.500" width="13" height="13" fill="#d9d9d9" stroke="#555" stroke-width="1.200"/><path d="M2 2 8 6 14 2M2 14 8 5 14 14M8 2V6" fill="none" stroke="${M}" stroke-width="1.300"/>`,
ann:`<path d="M1.500 1.500H14.500V11H11L8 14.500V11H1.500z" fill="#fff" stroke="${G}" stroke-width="1.200"/><path d="M5 4h6M8 4v5.500" stroke="${M}" stroke-width="1.700"/>`,
pal:`<path d="M8 1C13 0 16 5 14 9 12 14 4 17 2 13 0 9 3 2 8 1z" fill="#eee" stroke="#c4c4c4"/><circle cx="5" cy="6" r="1.500" fill="#c7d9ea"/><circle cx="9" cy="4" r="1.500" fill="#bfe0bf"/><circle cx="12" cy="7" r="1.500" fill="#eed79b"/><circle cx="8" cy="11" r="2" fill="#edb8cf"/>`,
deform:`<path d="M1 3Q12 3 14 13M1 7Q8 7 9 14M1 3V7M9 14H14" fill="none" stroke="#dba8c4" stroke-width="1.500"/>`,
filt:`<path d="M3 0h10v6H3z" fill="#edc0d6"/><path d="M1 6H15L10 11V15L6 16V11z" fill="#bdbdbd"/>`,
selg:`<path d="M1 1h3v3H1zM5 3h3v3H5z" fill="none" stroke="#bbb"/><path d="M4 6h4v4H4zM9 7h4v4H9zM11 11h4v4h-4z" fill="#ddb3ca" stroke="#bbb"/>`,
expg:`<rect x="1" y="2" width="12" height="11" fill="none" stroke="#bbb"/><path d="M1 3.500h12" stroke="#bbb" stroke-width="2"/>${tx(3,11,8,'#c9a0b6','a=',8)}<path d="M6 14H13V12L16 14.500 13 16" fill="#d7a6c0"/>`,
s1:`<path d="M9 2 14 4V13L9 15M9 2V12" fill="none" stroke="${G}" stroke-width="1.200"/><path d="M0 8H12" stroke="${M}" stroke-width="1.300"/><circle cx="11" cy="8" r="1.800" fill="${M}"/>`,
s2:`<path d="M3 13 14 1.500" stroke="${G}" stroke-width="1.200"/><rect x="1" y="11.500" width="3.500" height="3.500" fill="${M}"/>`,
s3:`<path d="M1 15 12 3" stroke="${G}" stroke-width="1.200"/><rect x="11.500" y="1" width="3.500" height="3.500" fill="${M}"/>`,
s4:`<path d="M9 3 13 1V13L9 15zM9 15H5" fill="none" stroke="${G}" stroke-width="1.200"/><path d="M0 7.500H8" stroke="${M}" stroke-width="1.400"/>`,
s5:`<path d="M1 1 9 10" stroke="${M}" stroke-width="1.300"/><path d="M6 8 11 6 15 10 12 15 7 14z" fill="#d5d7da" stroke="${G}"/><path d="M11 7V14M7 11 15 10" stroke="${G}"/>`,
s6:`<path d="M2 3.500H14V12H2z" fill="none" stroke="${G}" stroke-width="1.200"/><path d="M7 8 13 14" stroke="${M}" stroke-width="1.200"/><rect x="11.500" y="12" width="3.500" height="3.500" fill="${M}"/>`,
s7:`<path d="M4 5.500H14V12.500H4z" fill="none" stroke="${G}" stroke-width="1.200"/><path d="M3 3 14 15" stroke="${M}" stroke-width="1.200" stroke-dasharray="3 1"/><rect x="1" y="1" width="3.500" height="3.500" fill="${M}"/>`,
s8:`<path d="M3 3 7 1V11L3 13zM0 7.500H9" fill="none" stroke="${M}" stroke-width="1.300"/><path d="M10 4 14 2V13L10 15z" fill="#ddd" stroke="${G}"/>`,
s9:`<path d="M1 2 9 10M1 7 7 2M2 1V6L6 8V3z" fill="none" stroke="${M}"/><path d="M7 9 11 7 15 11 12 15.500 8 14z" fill="#d5d7da" stroke="${G}"/>`,
img3d:`<g fill="#fff" stroke="#a8a8a8" stroke-width=".7"><path d="M1 1h7v8H1z"/><path d="M4 3.500h7v8H4z"/><path d="M7.500 6h8v9h-8z" stroke="#8c8c8c"/></g><path d="M2.500 3h2v4.500h-2zM5.500 5.500h2v4.500h-2z" fill="#d8d8d8"/><path d="M9 8h4l1.500 1v4.500H10L9 12.500z" fill="${M}"/>`,
film:`<rect x="1" y="1.500" width="14" height="12.500" fill="${M}"/><path d="M1.700 4.200h3.800v7H1.700zM6.200 4.200h3.800v7H6.200zM10.700 4.200h3.600v7h-3.600z" fill="#dca6c3"/><path d="M2 2.800H15M2 12.700H15" stroke="#fff" stroke-width="1.100" stroke-dasharray="1.200 1.300"/>`,
left:`<path d="M1 8 6 3.500V6.500H15V9.500H6V12.500z" fill="${B}"/>`,leftg:`<path d="M1 8 6 3.500V6.500H15V9.500H6V12.500z" fill="#b4b4b4"/>`,
right:`<path d="M15 8 10 3.500V6.500H1V9.500H10V12.500z" fill="#b4b4b4"/>`,rightm:`<path d="M15 8 10 3.500V6.500H1V9.500H10V12.500z" fill="${M}"/>`,
up:`<path d="M8 1 3.500 6H6.500V15H9.500V6H12.500z" fill="#b4b4b4"/>`,dn:`<path d="M8 15 3.500 10H6.500V1H9.500V10H12.500z" fill="${B}"/>`,
eye:`<path d="M1 2.500H2.500M4 2.500H14" stroke="${D}" stroke-width="1.500"/><path d="M3 9.500Q8 4 13 9.500 8 14 3 9.500z" fill="none" stroke="${D}" stroke-width="1.500"/><circle cx="8" cy="9" r="2.300" fill="${D}"/>`,
lup:`<path d="M0 2.500H2M3 2.500H10" stroke="${D}" stroke-width="1.500"/><path d="M1 5.500H10M1 8.500H10M1 11.500H10M1 14H10" stroke="#a5a5a5"/><path d="M13.500 12V2M11 4.500 13.500 1.500 16 4.500" stroke="${D}" fill="none" stroke-width="1.500"/>`,
ldn:`<path d="M0 2.500H2M3 2.500H10" stroke="${D}" stroke-width="1.500"/><path d="M2 5.500H10M2 8.500H10M2 11.500H10M2 14H10" stroke="${D}" stroke-width="1.200"/><path d="M13.500 3V13M11 10.500 13.500 13.500 16 10.500" stroke="${D}" fill="none" stroke-width="1.500"/>`,
cols:`<path d="M2 2.500H9M2 5.500H9M2 8.500H9M2 11.500H9M2 14H9" stroke="#a5a5a5" stroke-width="1.300"/><path d="M10 2.500H14M10 5.500H14M10 8.500H14M10 11.500H14M10 14H14" stroke="${D}" stroke-width="1.600" stroke-dasharray="2.500 .6"/>`,
root:`<path d="M7 2 1 8 7 14 9 12 5 8 9 4z" fill="#3e6ca8"/><path d="M10 2 16 8 10 14 5 8z" fill="#3f5f92"/>`,
globe:`<g fill="#e8f0fa" stroke="${D}"><circle cx="8" cy="8" r="7"/><ellipse cx="8" cy="8" rx="3.500" ry="7"/><path d="M8 1V15M1 8H15M2.500 4.500H13.500M2.500 11.500H13.500"/></g>`,
pi:tx(0,11,12,'#3e6ca8','P',7)+tx(7.5,14,10,'#3e6ca8','i',3),
mats, comp:`<path d="M1 10Q1 5 8 5V10z" fill="#c8ccd0" stroke="#a5a8ac"/><path d="M8 5Q14 5 15 8H8z" fill="#c8ccd0"/><rect x="9" y="8" width="6" height="3.500" fill="${B}"/><path d="M8 0V16" stroke="#555" stroke-dasharray="3 1.500"/>`,
eq:`<path d="M3 4H13M3 8H13M3 12H13" stroke="${B}" stroke-width="2"/>`,
geom:`<path d="M1 2Q3 10 8 9 13 8 13 2M2 15 9 1 15 15M6 6Q4 14 1 14" fill="none" stroke="#e0694f" stroke-width="1.200"/>`,
heat:`<path d="M2 1Q0 5 2 8T2 15" stroke="#f08a1d" stroke-width="2" fill="none"/><path d="M5 3H13L15 5V13H7L5 11z" fill="#f08a1d" stroke="#d5134a" stroke-width="1.300"/><path d="M5 3 8 6H15M8 6V13" stroke="#d5134a" fill="none"/>`,
tri:`<path d="M8 2 15 14H1z" fill="#b9c6d3" stroke="#3f5263"/><path d="M5 8H11L8 14zM8 2V8L3 14M8 8 13 14" fill="none" stroke="#3f5263"/>`,
study:`<path d="M0 8Q2 3 4 7 5 10 6 9" fill="none" stroke="#2b93a0" stroke-width="1.300"/><circle cx="8" cy="9" r="2.200" fill="none" stroke="#2b93a0"/><path d="M10 9Q10 4 12 5 14 6 13 8M11 9Q12 12 14 11 16 9 14 7" fill="none" stroke="#2b93a0" stroke-width="1.200"/>`,
curve, solv:`<path d="M1.500 4V15M5 6V15M9 9V15M12 12V15" stroke="#aaa"/><path d="M0 1h4v3H0zM4 4h4v3H4zM8 7h4v3H8zM12 10h4v3h-4z" fill="${B}"/>`,
sol:`<rect x=".7" y=".7" width="14.600" height="14.600" fill="#fff" stroke="#4aa43c" stroke-width="1.400"/><path d="M2 4h4v2H2zM6 7h4v2H6z" fill="#a5a5a5"/><path d="M10 9h4v4h-4z" fill="${B}"/><path d="M12 3V8M3 7V13M7 10V13" stroke="${B}"/>`,
comp2:tx(0,5.5,6.5,'#4a82bd','∂u',9)+tx(0,15,6.5,'#4a82bd','∂t',8)+`<path d="M0 7.500H9M10.500 5H13M10.500 7H13M14 8V3Q14 1.500 16 2M13 4.500H16" stroke="${B}" fill="none"/>${gear}`,
uvw:tx(0,11,8,'#3e6ca8','u,v,w',16), tsolv:curve+gear,
res:`<path d="M1 8 3 15H15V12" fill="#aaa" stroke="#666"/><path d="M2 1H10V9H2zM4 3H12V11H4z" fill="#fff" stroke="#777"/><path d="M6 4.500H14.500V13H6z" fill="#e6bcd3" stroke="#555"/><path d="M8 6.500h5v4.500H8z" fill="${M}"/>`,
dots:`<path d="M3 2V5M7 2V5M11 2V5M14 2V5" stroke="#aaa" stroke-width="2" stroke-dasharray="1 1"/><path d="M3 6V14M7 6V14M11 6V14M14 6V14" stroke="${M}" stroke-width="2" stroke-dasharray="1.500 1.500"/>`,
axes, e85:tx(0,7,8,M,'8.85',16)+tx(0,14.500,8,M,'e-12',16),
tbl:grid(M,'#d58fb4'), sq:`<rect x="1" y="1" width="14" height="14" fill="${M}"/>`,
wave:`<path d="M1 8Q4 1 7 7T15 9" fill="none" stroke="${M}" stroke-width="1.400"/>`,
ptbl:`<path d="M2 0V15H16" fill="none" stroke="${G}"/><rect x="4" y="3" width="11" height="10" fill="#fff" stroke="${M}" stroke-width="1.300"/><path d="M4 3h11v3H4z" fill="#d58fb4"/><path d="M4 6.500H15M4 10H15M9.500 3V13" stroke="${M}"/>`,
exp:`<path d="M1 2H10L13 4V12H4L1 9zM4 5H15V14.500H5z" fill="#f0d3e1" stroke="${M}" stroke-width="1.200"/><path d="M1 2 5 6H15M7 8h6v4H7zM7 12 13 8M3 2 6 5M7 2 9 5" fill="none" stroke="${M}"/>`,
etbl:`<rect x="1" y="2" width="12" height="11.500" fill="#fff" stroke="${G}"/><path d="M3 5H9V11H3zM3 8H9M6 5V11" fill="none" stroke="${M}" stroke-width="1.200"/><path d="M9 7.500H12V5L16 8.500 12 12V9.500H9z" fill="${M}"/>`,
rep:`<rect x=".7" y=".7" width="14.500" height="13" fill="#fff" stroke="${G}"/><path d="M3 4H7M3 6.500H7M3 9H7M9 4H13M9 6.500H13" stroke="${M}"/><path d="M6 5Q8 9 9 12L15 16Q14 10 6 5z" fill="#d58fb4" stroke="${M}"/>`,
lbl:`<rect x="3" y="1" width="12" height="11.500" fill="#fff" stroke="#666"/><path d="M3 1h12v3H3z" fill="#c5c5c5" stroke="#888"/><path d="M6 7H13M6 9.500H13" stroke="#3f9a35"/><path d="M1 15 5 11M2.500 10H5.500V13" stroke="#3f9a35" stroke-width="1.400" fill="none"/>`,
src:`<path d="M3 1.500H8M5 4.500H9M3 7.500H8M5 10.500H9M3 13.500H9" stroke="#666"/><path d="M10.500 12.500H14V5H10M12 2.500 9.500 5 12 7.500" fill="none" stroke="#3f9a35" stroke-width="1.300"/>`,
zin:`<circle cx="6.500" cy="6.500" r="5" fill="#f4f9ff" stroke="${D}" stroke-width="1.800"/><path d="M10 10 15 15" stroke="${D}" stroke-width="2.500"/><path d="M4 6.500H9M6.500 4V9" stroke="${B}" stroke-width="1.500"/>`,
zout:`<circle cx="6.500" cy="6.500" r="5" fill="#f4f9ff" stroke="${D}" stroke-width="1.800"/><path d="M10 10 15 15" stroke="${D}" stroke-width="2.500"/><path d="M4 6.500H9" stroke="${B}" stroke-width="1.500"/>`,
zbox:`<rect x=".5" y="5.500" width="9" height="9" fill="none" stroke="${D}" stroke-dasharray="2 1.500"/><circle cx="8.500" cy="6" r="4.500" fill="#f4f9ff" stroke="${D}" stroke-width="1.600"/><path d="M12 9.500 16 14" stroke="${D}" stroke-width="2.300"/><path d="M6 6H11M8.500 3.500V8.500" stroke="${B}" stroke-width="1.300"/>`,
zext:`<rect x=".7" y=".7" width="14.600" height="14.600" fill="#f4f9ff" stroke="#777" stroke-width="1.300"/><path d="M8 1.500 5.500 4.500h5zM8 14.500 5.500 11.500h5zM1.500 8 4.500 5.500v5zM14.500 8 11.500 5.500v5z" fill="${B}"/><path d="M5 8H11M8 5V11" stroke="${B}" stroke-width="1.600"/>`,
xy:axp('xy','#3c9a35','#b02030'),yz:axp('yz','#3f6aa0','#3c9a35'),zx:axp('zx','#b02030','#3f6aa0'),
pgrid:press(`<path d="M2 2H14V14H2zM2 6H14M2 10H14M6 2V14M10 2V14" stroke="${D}" fill="#fff"/>`),
paxes:press(`<g transform="translate(1.500 2) scale(.8)">${axes}</g>`),
pleg:press(`<rect x="9.500" y="1" width="4" height="14" fill="#e8742a"/><rect x="9.500" y="1" width="4" height="4" fill="#f6c04a"/><rect x="9.500" y="11" width="4" height="4" fill="#b8323c"/>`),
plight:`<rect x="-1" y="-1.500" width="17.500" height="19" rx="1.500" fill="#9cc4ee" stroke="#36588a" stroke-width="1.200"/><path d="M9 2 0 8 9 14z" fill="${D}"/><path d="M10 4.500Q14 8 10 11.500M12 3Q17 8 12 13" fill="none" stroke="#4a82bd" stroke-width="1.200"/>`,
trans:`<path d="M1 1.500H11V10H1z" fill="#dbe8f5" stroke="#7f9cc0" stroke-width="1.200"/><path d="M4.500 5H15V14.500H4.500zM1 1.500 4.500 5M11 1.500 15 5M1 10 4.500 14.500" fill="#dbe8f5" fill-opacity=".6" stroke="#6d8fbb" stroke-width="1.200"/><path d="M7 7.500H12.500V12H7z" fill="#fff" stroke="#8fa9c9"/>`,
cam:`<path d="M0 4H4L5.500 2H10.500L12 4H16V14H0z" fill="${B}"/><circle cx="8" cy="9" r="3.600" fill="#fff"/><circle cx="8" cy="9" r="2" fill="${B}"/>`,
print:`<path d="M3.500 7V.8H12.500V7" fill="#fff" stroke="${B}" stroke-width="1.300"/><path d="M1 7H15V14H1z" fill="${B}"/><path d="M3 11H13V16H3z" fill="#fff" stroke="${B}"/>`,
pt:`<rect x="0" y="0" width="16" height="16" rx="1" fill="#d2e3f5" stroke="${B}"/><path d="M3 4h2M8 4h2" stroke="${D}" stroke-width="2"/><path d="M12 4h2" stroke="#d91a5e" stroke-width="2"/><path d="M3.500 8V14M8 8V14M12.500 8V14" stroke="${B}" stroke-width="2.500" stroke-dasharray="2.500 .8"/>`,
auto:`<rect x="-1" y="-1.500" width="18" height="19" rx="1.500" fill="#9cc8f2" stroke="${D}"/><rect x="0" y="8" width="16" height="9" fill="#c9e2fa"/>${tx(0,11.500,8.5,D,'AUTO',16)}`,
n1:tx(2,7,8,D,'8.5',12)+tx(2,15,8,D,'e-1',12),n2:tx(1,7,8,D,'850',13)+tx(2,15,8,D,'e-3',12),n3:tx(0,11.500,8,D,'0.85',16),
broom:`<path d="M3 0 8 8" stroke="#a05a35" stroke-width="1.600"/><path d="M6 8 9.500 6.500 14 15 8 15.500z" fill="#e8c39a" stroke="#b07a48"/>`,
copyt:`<path d="M0 0h10v10H0z" fill="#fff" stroke="#777"/><path d="M2 3H8M2 6H5" stroke="#777"/><path d="M5 4.500H15.500V15.500H5z" fill="#fff" stroke="${D}"/><path d="M7 7H14M7 10h7v4H7zM10.500 10v4M7 12h7" stroke="${B}" fill="none"/>`,
expt:`<rect x="1" y="2" width="12" height="11.500" fill="#fff" stroke="#777"/><path d="M1 4H13M4 4V13" stroke="#777" stroke-width="1.300"/><path d="M6 8.500H12V6L16 9 12 12V10H6z" fill="${B}"/>`,
chu:`<path d="M2 12 8 5 14 12" fill="none" stroke="#999" stroke-width="2.500"/>`,chd:`<path d="M2 4 8 11 14 4" fill="none" stroke="#999" stroke-width="2.500"/>`,
tro:`<path d="M14 2V14H2z" fill="#444"/>`,trc:`<path d="M4 2V14L12 8z" fill="#fff" stroke="#a0a0a0" stroke-width="1.500"/>`,
rec:mats+`<path d="M0 12.500 5 8.500V11H10V14H5V16z" fill="#e0573a"/>`,
cs:`<rect x="0" y="3" width="16" height="11" rx="2" fill="#14418f"/><rect x="1.500" y="4" width="9" height="8.500" rx="2" fill="#3fb6e8"/><path d="M4 5h6v6H4z" fill="#f4ea66"/>`,
acdc:bk+bolt,bio:`<rect x="1" y="1.500" width="14" height="13.500" fill="${B}"/><path d="M3 13Q5 6 10 3L13 8 12 13z" fill="#3fae49"/><path d="M5 12Q7 7 10 5L12 9 10 12z" fill="#f7a81b"/>`,
build:bk+`<path d="M1 4Q0 9 2 14" stroke="#f08a1d" stroke-width="2" fill="none"/><path d="M3 3 9 8 13 4 16 8V16H4z" fill="#a81238"/><path d="M6 9 10 13 14 9" stroke="#f7a81b" stroke-width="1.500" fill="none"/><circle cx="13.500" cy="3" r="2" fill="#d91a8a"/>`,
fluid:bk+`<path d="M3 5Q0 10 3 11 6 10 3 5z" fill="${D}"/><path d="M7 4Q9 2 11 4T15 4M7 8Q9 6 11 8T15 8M7 12Q9 10 11 12T15 12" fill="none" stroke="${B}" stroke-width="1.300"/>`,
mag:bk+`<path d="M4 15V8A4 4 0 0 1 12 8V15" fill="none" stroke="#d5134a" stroke-width="3"/><path d="M2.500 12.500h3V15h-3zM10.500 12.500h3V15h-3z" fill="#888"/>`,
thel:bk+`<path d="M0 3 7 6V4L11 9H8L11 15 3 9H6z" fill="${B}"/><path d="M12.500 1Q10.500 5 12.500 8T12 15M15 1Q13 5 15 8T14.500 15" stroke="#f08a1d" stroke-width="1.400" fill="none"/>`,
user:`<rect x="3" y="1" width="4" height="14" fill="#dbe8f5" stroke="${D}"/><rect x="7" y="1" width="3" height="14" fill="#3fae49"/><rect x="10" y="1" width="3" height="14" fill="#f7a81b"/><rect x="13" y="1" width="3" height="14" fill="#d91a8a"/><circle cx="4.500" cy="8" r="2.300" fill="#fff" stroke="${D}"/><path d="M.5 15.500Q1 11 4.500 11T8.500 15.500z" fill="#fff" stroke="${D}"/>`
};
const ic=(n,c='size-4')=>`<svg class="${c} shrink-0 overflow-visible" viewBox="0 0 16 16">${I[n]}</svg>`;
const $=id=>document.getElementById(id);

$('qat').innerHTML=['newf','open','save','saveas','run','undo','redo','copy','paste','dup','del','sel','clr','find'].map(n=>`<span class="w-[24.1px] flex justify-center">${ic(n)}</span>`).join('');
$('tabs').innerHTML=['主屏幕','定义','几何','材料','物理场','网格','研究','结果','开发工具'].map(t=>`<span class="px-[13px]">${t}</span>`).join('');
const rb=(l)=>l.map(([n,t,hi])=>n?`<div class="h-[22px] flex items-center"><div class="flex items-center gap-[3px] ${hi?'bg-[#99d1ff] outline outline-1 -outline-offset-1 outline-[#2a90e8] h-5 w-[86px] pl-[2px]':'pl-[1px]'}">${ic(n)}<span>${t}</span></div></div>`:'<div></div>').join('');
$('rg1').innerHTML=rb([['vol','体'],['volar','体箭头'],['surf','表面'],['slice','切面'],['iso','等值面'],['surfar','面上箭头'],['line','线'],['cont','等值线'],['stream','流线'],['linear','线上箭头'],['mesh','网格'],['ann','标注']]);
$('rg2').innerHTML=rb([['pal','颜色表达式'],['deform','变形'],['filt','过滤器'],['selg','选择'],['expg','导出表达式'],[0]]);
$('rg3').innerHTML=rb([['s1','沿法向计算',1],['s2','截线起点'],['s3','截线终点'],['s4','截线方向'],['s5','截线平面法线'],['s6','截面法线起点'],['s7','截面法线终点'],['s8','截面法线'],['s9','通过表面的截面法线']]);

// '|' = separator, 'v' = dropdown arrow, '_' = small gap
const bar=(l,vw='w-4',gw='w-1')=>l.map(n=>n==='|'?`<span class="w-4 flex justify-center"><span class="w-px h-[17px] bg-[#cfd2d6]"></span></span>`:n==='_'?`<span class="${gw}"></span>`:n==='v'?`<span class="${vw} flex justify-center">${ic('down','size-[9px]')}</span>`:`<span class="w-6 flex justify-center">${ic(n)}</span>`).join('');
$('treebar').innerHTML=bar(['left','right','up','dn','eye','v','_','lup','ldn','cols','v'],'w-3','w-1.5');
$('gbar').innerHTML=bar(['zin','zout','zbox','zext','|','axes','v','_','xy','yz','zx','pgrid','paxes','pleg','|','plight','trans','|','cam','print']);
$('tbar').innerHTML=bar(['pt','|','e85','auto','n1','n2','n3','|','broom','del','ptbl','sq','copyt','expt','tbl','v']);

// [level, state (o open, c closed, - leaf), icon, label, tag]
const T=[[0,'o','root','<span class="tracking-[0.25px]">C8.2.mph</span>','(root)'],[1,'o','globe','全局定义'],[2,'-','pi','参数'],[2,'-','mats','材料'],[1,'o','comp','组件 1','(comp1)'],[2,'c','eq','定义'],[2,'c','geom','几何 1'],[2,'o','mats','材料'],[3,'c','mats','<span class="tracking-[0.25px]">Copper</span>','(mat1)'],[2,'c','heat','固体传热','(ht)'],[2,'-','tri','网格 1'],[1,'o','study','研究 1'],[2,'-','curve','步骤 1: 瞬态'],[2,'o','solv','求解器配置'],[3,'o','sol','解 1','(sol1)'],[4,'-','comp2','编译方程: 瞬态'],[4,'c','uvw','因变量 1'],[4,'c','tsolv','瞬态求解器 1'],[1,'o','res','结果'],[2,'c','dots','数据集'],[2,'c','axes','视图'],[2,'c','e85','派生值'],[2,'c','tbl','表格'],[2,'o','vol','三维温度 (ht)','',1],[3,'-','surf','表面 1'],[2,'o','sq','等温线 (ht)'],[3,'-','cont','等值线 1'],[2,'o','wave','探针图组 3'],[3,'-','ptbl','探针表图 1'],[2,'o','exp','导出'],[3,'-','etbl','表格 1.1'],[2,'-','rep','报告']];
const tri=s=>s==='-'?'<span class="w-2.5"></span>':ic(s==='o'?'tro':'trc','size-[9px] mr-px');
$('tree').innerHTML=T.map(([l,s,n,t,g,sel])=>`<div class="h-[19px] flex items-center" style="padding-left:${5.5+l*19}px">${tri(s)}<div class="ml-[1px] h-[19px] flex items-center pl-1 pr-[3px] ${sel?'bg-[#a0d2fb]':''}">${ic(n)}<span class="ml-1">${t}${g?` <em class="tracking-[0.55px]">${g}</em>`:''}</span></div></div>`).join('');
$('mats').innerHTML=[['rec','最近使用的材料'],['cs','内置材料'],['acdc','AC/DC'],['bio','生物热'],['build','建筑'],['fluid','流体和气体'],['mag','非线性磁性材料'],['thel','热电'],['user','用户定义库']].map(([n,t])=>`<div class="h-[19px] flex items-center pl-[17px]">${tri('c')}<span class="ml-[3px]">${ic(n)}</span><span class="ml-1 tracking-[0.1px]">${t}</span></div>`).join('');

document.querySelectorAll('[data-sec]').forEach(e=>{e.innerHTML=`<div class="h-[27px] bg-[#dfe9f5] flex items-center pl-[5px] text-[13px]">${ic(e.dataset.open?'ddark':'trc','size-[9px]')}<span class="ml-[15px] -mt-0.5">${e.dataset.sec}</span></div>`});
document.querySelectorAll('[data-row]').forEach(e=>{const [a,w,cw,t,b]=e.dataset.row.split('|');e.innerHTML=`<span class="shrink-0 [word-spacing:1.5px]" style="width:${w}px">${a}</span><div class="h-[22px] shrink-0 border border-[#9fa2a6] rounded-[2px] bg-gradient-to-b from-[#f2f2f2] to-[#e6e6e6] flex items-center pl-[11px] pr-[5px]" style="width:${cw}px"><span class="-mt-px [word-spacing:1.5px]">${t}</span><span class="ml-auto">${ic('down','size-2')}</span></div>${b?`<div class="ml-[8px] w-[21px] h-[23px] rounded-[2px] border border-[#9fa2a6] bg-[#f0f0f0] flex items-center justify-center">${ic('src')}</div>`:''}`});
document.querySelectorAll('[data-chk]').forEach(e=>{e.innerHTML=`<span class="size-[14px] border border-[#606060] bg-white mr-[5px] flex items-center justify-center">${e.dataset.chk==='1'?'<svg class="size-3" viewBox="0 0 16 16"><path d="M3 7.500 6.500 12.500 13.500 3" fill="none" stroke="#222" stroke-width="2.500"/></svg>':''}</span><span>${e.textContent}</span>`});

$('thead').innerHTML=['时间 (s)','温度 (K), 边界探针 1','温度 (K), 边界探针 2','温度 (K), 边界探针 3','温度 (K), 边界探针 4',''].map((h,i)=>`<div class="border-r border-[#dfe2e5] pt-[8px] overflow-hidden ${i?'pl-[5px] [word-spacing:1.3px]':'pl-0 tracking-[0.1px]'}">${h}</div>`).join('');
const R=`0.0000 300.15 300.15 300.15 300.15
1.5000 300.58 300.49 300.30 300.19
3.0000 300.99 300.81 300.43 300.23
4.5000 301.37 301.11 300.55 300.26
6.0000 301.73 301.40 300.67 300.29
7.5000 302.05 301.65 300.77 300.32
9.0000 302.37 301.90 300.87 300.35
10.500 302.69 302.15 300.97 300.37
12.000 302.96 302.36 301.06 300.40`.split('\n').map(r=>r.split(' '));
$('tbody').innerHTML=R.map((r,i)=>`<div class="h-5 grid grid-cols-[42px_120px_120px_120px_120px_1fr] border-b border-[#adadad]">${r.map(c=>`<div class="border-r border-[#adadad] pl-px leading-[19px] ${i===3?'bg-[#dadadc]':''}">${c}</div>`).join('')}<div></div></div>`).join('');

document.querySelectorAll('[data-i]').forEach(e=>{e.outerHTML=ic(e.dataset.i,e.className)});
</script>
</body>
</html>
